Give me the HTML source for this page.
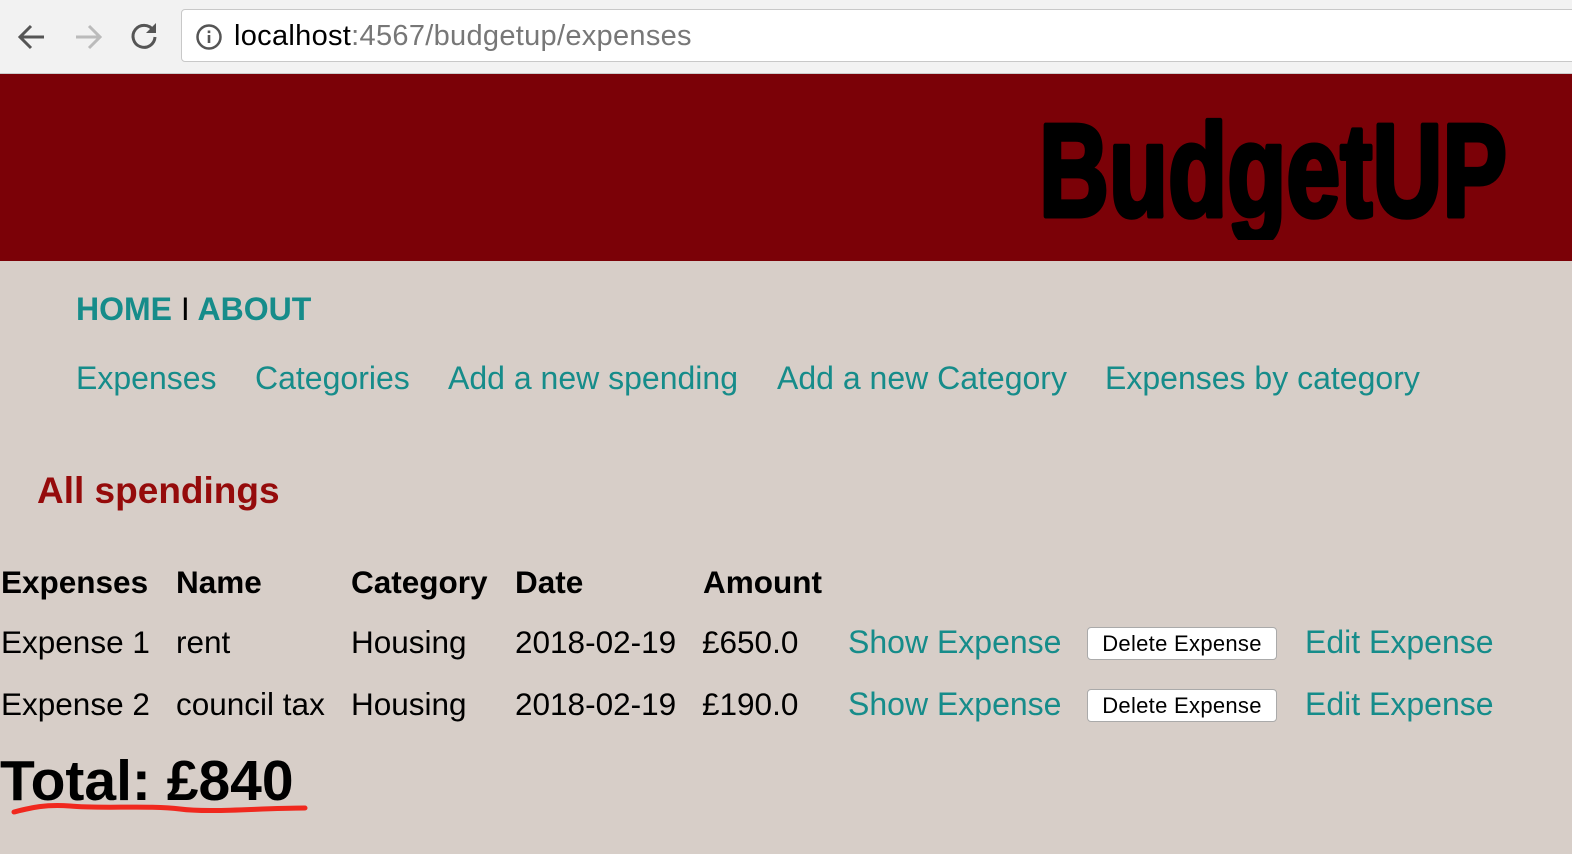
<!DOCTYPE html>
<html><head><meta charset="utf-8"><style>
*{margin:0;padding:0;box-sizing:border-box}
body{width:1572px;height:854px;overflow:hidden;background:#d7cec8;font-family:"Liberation Sans",Arial,sans-serif;position:relative}
.a{position:absolute;white-space:nowrap}
.chrome{position:absolute;left:0;top:0;width:1572px;height:74px;background:#f2f2f2;border-bottom:1px solid #ccc}
.url{position:absolute;left:181px;top:9px;width:1400px;height:53px;background:#fff;border:1px solid #c8c8c8;border-radius:4px}
.hdr{position:absolute;left:0;top:74px;width:1572px;height:187px;background:#7b0107}
.t{color:#168c8a}
.td{font-size:31.5px;color:#000}
.th{font-size:31.5px;font-weight:bold;color:#000}
.btn{position:absolute;width:190px;height:33px;background:#fff;border:1px solid #aaa;border-radius:4px;font-size:22px;text-align:center;line-height:31px;color:#000;letter-spacing:0.3px}
</style></head><body>
<div class="chrome">
<svg class="a" style="left:16px;top:22px" width="32" height="30" viewBox="0 0 32 30"><path d="M28 15H5M15 4L4 15l11 11" stroke="#555" stroke-width="3" fill="none"/></svg>
<svg class="a" style="left:72px;top:22px" width="32" height="30" viewBox="0 0 32 30"><path d="M4 15h23M17 4l11 11-11 11" stroke="#bbb" stroke-width="3" fill="none"/></svg>
<svg class="a" style="left:128px;top:20px" width="32" height="32" viewBox="0 0 32 32"><path d="M25 10A11 11 0 1 0 27 17" stroke="#555" stroke-width="3" fill="none"/><path d="M28 3v10H18z" fill="#555"/></svg>
<div class="url">
<svg class="a" style="left:13px;top:13px" width="28" height="28" viewBox="0 0 28 28"><circle cx="14" cy="14" r="11.5" stroke="#555" stroke-width="2.5" fill="none"/><rect x="12.7" y="12" width="2.6" height="8" fill="#555"/><rect x="12.7" y="7.5" width="2.6" height="2.6" fill="#555"/></svg>
<div class="a" style="left:52px;top:10px;font-size:29px;color:#000;letter-spacing:0.3px">localhost<span style="color:#777">:4567/budgetup/expenses</span></div>
</div>
</div>
<div class="hdr"></div>
<svg class="a" style="left:1036px;top:100px" width="480" height="140"><text x="3" y="116" textLength="468" lengthAdjust="spacingAndGlyphs" font-family="Liberation Sans, sans-serif" font-weight="bold" font-size="132" fill="#000" stroke="#000" stroke-width="5" stroke-linejoin="round">BudgetUP</text></svg>
<div class="a t" style="left:76px;top:291px;font-size:32px;font-weight:bold">HOME <span style="color:#000;font-weight:normal">I</span> ABOUT</div>
<div class="a t" style="left:76px;top:360px;font-size:32px">Expenses</div>
<div class="a t" style="left:255px;top:360px;font-size:32px">Categories</div>
<div class="a t" style="left:448px;top:360px;font-size:32px">Add a new spending</div>
<div class="a t" style="left:777px;top:360px;font-size:32px">Add a new Category</div>
<div class="a t" style="left:1105px;top:360px;font-size:32px">Expenses by category</div>
<div class="a" style="left:37px;top:470px;font-size:37px;font-weight:bold;color:#950b0b">All spendings</div>
<div class="a th" style="left:1px;top:564px">Expenses</div>
<div class="a th" style="left:176px;top:564px">Name</div>
<div class="a th" style="left:351px;top:564px">Category</div>
<div class="a th" style="left:515px;top:564px">Date</div>
<div class="a th" style="left:703px;top:564px">Amount</div>
<div class="a td" style="left:1px;top:624px">Expense 1</div>
<div class="a td" style="left:176px;top:624px">rent</div>
<div class="a td" style="left:351px;top:624px">Housing</div>
<div class="a td" style="left:515px;top:624px">2018-02-19</div>
<div class="a td" style="left:702px;top:624px">£650.0</div>
<div class="a t" style="left:848px;top:624px;font-size:32px">Show Expense</div>
<div class="btn" style="left:1087px;top:627px">Delete Expense</div>
<div class="a t" style="left:1305px;top:624px;font-size:32px">Edit Expense</div>
<div class="a td" style="left:1px;top:686px">Expense 2</div>
<div class="a td" style="left:176px;top:686px">council tax</div>
<div class="a td" style="left:351px;top:686px">Housing</div>
<div class="a td" style="left:515px;top:686px">2018-02-19</div>
<div class="a td" style="left:702px;top:686px">£190.0</div>
<div class="a t" style="left:848px;top:686px;font-size:32px">Show Expense</div>
<div class="btn" style="left:1087px;top:689px">Delete Expense</div>
<div class="a t" style="left:1305px;top:686px;font-size:32px">Edit Expense</div>
<div class="a" style="left:0px;top:748px;font-size:57px;font-weight:bold;color:#000">Total: £840</div>
<svg class="a" style="left:10px;top:800px" width="305" height="22" viewBox="0 0 305 22"><path d="M4 12C20 8 35 4 60 6 90 9 140 5 170 9 200 13 250 8 295 8" stroke="#f0281e" stroke-width="5" fill="none" stroke-linecap="round"/></svg>
</body></html>
